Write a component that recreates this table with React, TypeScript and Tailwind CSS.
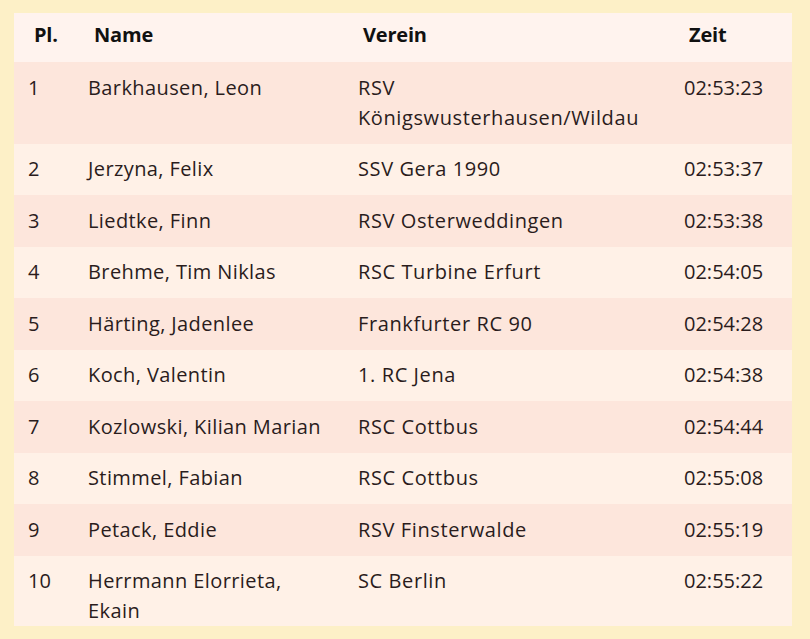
import React from "react";

const rows: [string, React.ReactNode, React.ReactNode, string][] = [
  ["1", "Barkhausen, Leon", <>RSV<br />Königswusterhausen/Wildau</>, "02:53:23"],
  ["2", "Jerzyna, Felix", "SSV Gera 1990", "02:53:37"],
  ["3", "Liedtke, Finn", "RSV Osterweddingen", "02:53:38"],
  ["4", "Brehme, Tim Niklas", "RSC Turbine Erfurt", "02:54:05"],
  ["5", "Härting, Jadenlee", "Frankfurter RC 90", "02:54:28"],
  ["6", "Koch, Valentin", "1. RC Jena", "02:54:38"],
  ["7", "Kozlowski, Kilian Marian", "RSC Cottbus", "02:54:44"],
  ["8", "Stimmel, Fabian", "RSC Cottbus", "02:55:08"],
  ["9", "Petack, Eddie", "RSV Finsterwalde", "02:55:19"],
  ["10", <>Herrmann Elorrieta,<br />Ekain</>, "SC Berlin", "02:55:22"],
];

export default function App() {
  return (
    <div
      className="w-[810px] h-[639px] bg-[#fdf0c7] pt-[13px] pl-[14px] overflow-hidden"
      style={{ fontFamily: "'Open Sans', Lato, sans-serif" }}
    >
      <div className="w-[778px] h-[613px] overflow-hidden">
        <div className="grid grid-cols-[60px_270px_326px_122px] h-[49px] bg-[#fff3ee] pt-[8px] text-[20px] leading-[28px] font-bold text-[#111] tracking-[-0.2px]">
          <div className="pl-[20px]">Pl.</div>
          <div className="pl-[20px]">Name</div>
          <div className="pl-[19px]">Verein</div>
          <div className="pl-[19px]">Zeit</div>
        </div>
        {rows.map((r, i) => (
          <div
            key={i}
            className={
              "grid grid-cols-[60px_270px_326px_122px] text-[20px] leading-[30px] text-[#2a1c1c] pt-[10.5px] pb-[11px] " +
              (i % 2 === 0 ? "bg-[#fde6dc]" : "bg-[#fff1e7]")
            }
          >
            <div className="pl-[14px]">{r[0]}</div>
            <div className="pl-[14px] pr-2 tracking-[0.4px]">{r[1]}</div>
            <div className="pl-[14px] pr-1 tracking-[0.6px]">{r[2]}</div>
            <div className="pl-[14px]">{r[3]}</div>
          </div>
        ))}
      </div>
    </div>
  );
}
